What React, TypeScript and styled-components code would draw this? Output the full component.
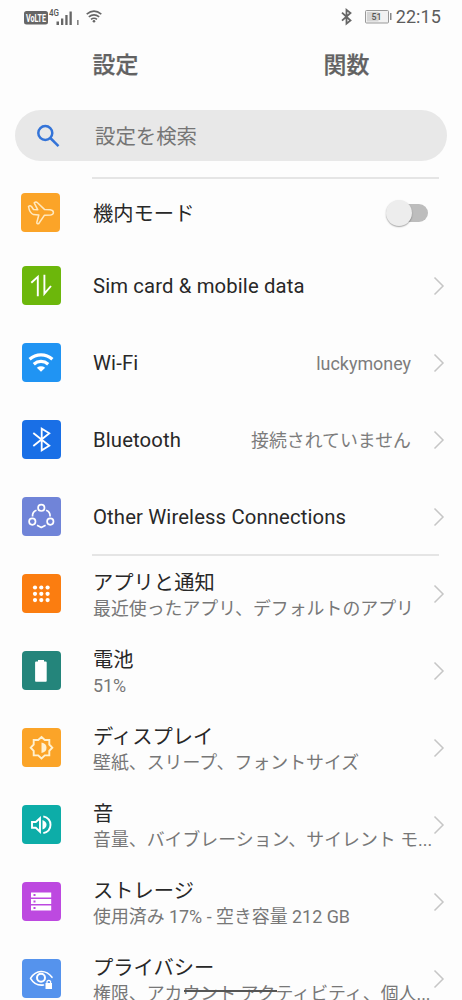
import React from "react";
import styled, { createGlobalStyle } from "styled-components";

const Global = createGlobalStyle`
  * { box-sizing: border-box; }
  html, body { margin: 0; padding: 0; background: #fdfdfd; }
  body { font-family: Roboto, "Noto Sans CJK JP", sans-serif; overflow: hidden; }
`;

const Screen = styled.main`
  position: relative;
  width: 462px;
  height: 1000px;
  overflow: hidden;
  background: #fdfdfd;
`;

const StatusBar = styled.header`
  display: flex;
  justify-content: space-between;
  height: 34px;
  padding: 0 21px 0 24px;
  color: #666;
`;

const StatusGroup = styled.div`
  display: flex;
  align-items: center;
`;

const Clock = styled.span`
  margin-left: 4px;
  font-size: 18px;
  line-height: 34px;
  letter-spacing: 0.1px;
  color: #5c5c5c;
`;

const Tabs = styled.nav`
  display: flex;
  height: 76px;
`;

const Tab = styled.div`
  width: 231px;
  padding-top: 16px;
  text-align: center;
  font-size: 22.9px;
  line-height: 31px;
  font-weight: 500;
  color: #626262;
  -webkit-text-stroke: 0.25px #626262;
`;

const Search = styled.div`
  display: flex;
  align-items: center;
  height: 51px;
  margin: 0 15px;
  padding-left: 21px;
  border-radius: 26px;
  background: #e8e8e8;
  color: #757575;
  font-size: 20.4px;
  line-height: 30px;
`;

const SearchText = styled.span`
  margin: 2px 0 0 35px;
`;

const Divider = styled.div<{ $top?: number; $bottom?: number }>`
  height: 2px;
  margin: ${(p) => p.$top ?? 0}px 23px ${(p) => p.$bottom ?? 0}px 92px;
  background: #e5e5e5;
`;

const Row = styled.div<{ $height?: number; $shift?: number }>`
  display: flex;
  align-items: center;
  height: ${(p) => p.$height ?? 77}px;
  padding: 0 17px 0 ${(p) => 22 - (p.$shift ?? 0)}px;
`;

const Tile = styled.div<{ $color: string; $lift?: number }>`
  flex: none;
  width: 39px;
  height: 39px;
  margin-bottom: ${(p) => p.$lift ?? 0}px;
  border-radius: 4px;
  background: ${(p) => p.$color};
  svg { display: block; }
`;

const Labels = styled.div<{ $indent?: number; $drop?: number }>`
  flex: 1;
  min-width: 0;
  margin-left: ${(p) => p.$indent ?? 32}px;
  margin-top: ${(p) => p.$drop ?? 0}px;
  white-space: nowrap;
`;

const Title = styled.div<{ $latin?: boolean }>`
  font-size: 20.3px;
  line-height: 26px;
  letter-spacing: ${(p) => (p.$latin ? 0.13 : 0)}px;
  color: #282828;
`;

const Subtitle = styled.div`
  font-size: 17.9px;
  line-height: 26px;
  color: #777;
`;

const Value = styled.span`
  margin: 2px 22px 0 0;
  font-size: 17.9px;
  line-height: 26px;
  color: #7c7c7c;
`;

const Toggle = styled.div`
  display: flex;
  align-items: center;
  width: 37px;
  height: 18px;
  margin-right: 17px;
  margin-bottom: 1px;
  border-radius: 9px;
  background: #bdbdbd;
`;

const Knob = styled.div`
  flex: none;
  width: 26px;
  height: 26px;
  margin-left: -5px;
  border-radius: 50%;
  background: #ededed;
  box-shadow: 0 1px 1.5px rgba(0, 0, 0, 0.35);
`;

const HomeBar = styled.div`
  position: absolute;
  left: 184px;
  top: 990px;
  width: 93px;
  height: 2px;
  background: #555;
`;

const Chevron = () => (
  <svg width="12" height="20" viewBox="0 0 12 20" fill="none" stroke="#c6c6c6" strokeWidth="1.5">
    <path d="M1.500 1.500 10 10 1.500 18.500" />
  </svg>
);

const Glyph = ({ children, width = 1.5 }: { children: React.ReactNode; width?: number }) => (
  <svg width="39" height="39" viewBox="0 0 39 39" fill="none" stroke="#fff" strokeWidth={width} strokeLinecap="round" strokeLinejoin="round">
    {children}
  </svg>
);

const icons = {
  plane: (
    <Glyph width={1.5}>
      <path stroke="#ffe9c0" d="M7.500 13.500q1.500-1.500 3 0l2 3 4.300.3-3.600-7q1.800-1.600 3.300 0l7.200 6.800 5.500.2c4.200.6 4.200 4.600.5 5.200l-6.200.2-5.700 8.300q-2 .8-2-1l2-7.500-5.300-.4C9.500 20.500 8 17 7.500 13.500Z" />
    </Glyph>
  ),
  data: (
    <Glyph width={1.9}>
      <path strokeLinecap="butt" strokeLinejoin="miter" d="M9.300 16.800 15.800 10.800v19.400M22.400 8.800v18.800l6.600-7.600" />
    </Glyph>
  ),
  wifi: (
    <Glyph width={3.2}>
      <path strokeLinecap="butt" d="M7.600 16.200c6.500-5.800 16.300-5.800 22.800 0M11.800 21.200c4.200-3.700 10.200-3.700 14.400 0" />
      <path stroke="none" fill="#fff" d="M14.800 24.700q4.200-2.900 8.400 0L19 28.700Z" />
    </Glyph>
  ),
  bluetooth: (
    <Glyph width={1.8}>
      <path strokeLinecap="butt" strokeLinejoin="miter" d="m11.300 13 16 12.700-7.600 4.600V8.700l7.600 4.600L11.300 26" />
    </Glyph>
  ),
  link: (
    <Glyph width={1.7}>
      <circle cx="19.300" cy="10.800" r="3.200" />
      <circle cx="10.300" cy="24.600" r="3.200" />
      <circle cx="28.300" cy="24.600" r="3.200" />
      <path strokeLinecap="butt" d="M14.500 13.300q-4.200 1.500-4 6.200M24.100 13.300q4.200 1.500 4 6.200M15 28.200l4.300 2.200 4.300-2.200" />
    </Glyph>
  ),
  apps: (
    <Glyph>
      <g fill="#fff" stroke="none">
        {[13, 19.3, 25.6].map((y) => [13, 19.3, 25.6].map((x) => <circle key={`${x}-${y}`} cx={x} cy={y + 0.5} r="2.100" />))}
      </g>
    </Glyph>
  ),
  battery: (
    <Glyph>
      <path fill="#fff" stroke="none" d="M16 9h6v1.500h1.700q1 0 1 1v18.500q0 .8-.8.800h-10q-.8 0-.8-.8V11.500q0-1 1-1H16Z" />
    </Glyph>
  ),
  brightness: (
    <Glyph width={1.9}>
      <path stroke="#fff1d0" strokeLinejoin="miter" d="m19.500 9 3.300 3h4.500v4.500l3 3.200-3 3.200v4.500h-4.500l-3.300 3-3.300-3h-4.500v-4.500l-3-3.200 3-3.200V12h4.500Z" />
      <path fill="#fff1d0" stroke="none" d="M19.500 14.500q5 1 5 5.200t-5 5.200Z" />
    </Glyph>
  ),
  sound: (
    <Glyph width={1.9}>
      <path strokeLinecap="butt" strokeLinejoin="miter" d="M10 17h3.800l4.200-3.800v13.500l-4.200-3.900H10Z" />
      <path fill="#fff" stroke="none" d="M20.500 15q4 1.600 4 4.800t-4 4.800Z" />
      <path strokeLinecap="butt" d="M21.300 11.300c9.600 2.500 9.600 14.400 0 16.900" />
    </Glyph>
  ),
  storage: (
    <Glyph>
      <g stroke="none">
        <path fill="#fff" d="M9 10.400h20.200v5H9ZM9 17h20.200v5H9ZM9 23.600h20.200v5H9Z" />
        <path fill="#bd49e0" d="M11.500 11.900h2v2h-2ZM11.500 18.500h2v2h-2ZM11.500 25.100h2v2h-2Z" />
      </g>
    </Glyph>
  ),
  privacy: (
    <Glyph width={1.6}>
      <path d="M21.500 26c-5.400.8-10-1.700-13-6.700 5.500-8.800 15.500-8.800 21.500-1" />
      <circle cx="19" cy="18.800" r="4" strokeWidth="2" />
      <path fill="#fff" stroke="none" d="M23.500 24h6.500v6h-6.500Z" />
      <path strokeWidth="1.200" d="M25 24v-1.500q1.800-2.200 3.600 0V24" />
    </Glyph>
  ),
};

type Item = { icon: keyof typeof icons; color: string; title: string; sub?: string; value?: string; latin?: boolean };

const wireless: Item[] = [
  { icon: "data", color: "#6cb70b", title: "Sim card & mobile data", latin: true },
  { icon: "wifi", color: "#2094f3", title: "Wi-Fi", value: "luckymoney", latin: true },
  { icon: "bluetooth", color: "#196fe6", title: "Bluetooth", value: "接続されていません", latin: true },
  { icon: "link", color: "#7084d8", title: "Other Wireless Connections", latin: true },
];

const system: Item[] = [
  { icon: "apps", color: "#fb7d10", title: "アプリと通知", sub: "最近使ったアプリ、デフォルトのアプリ" },
  { icon: "battery", color: "#24857b", title: "電池", sub: "51%" },
  { icon: "brightness", color: "#fba428", title: "ディスプレイ", sub: "壁紙、スリープ、フォントサイズ" },
  { icon: "sound", color: "#0dada8", title: "音", sub: "音量、バイブレーション、サイレント モ..." },
  { icon: "storage", color: "#bd49e0", title: "ストレージ", sub: "使用済み 17% - 空き容量 212 GB" },
  { icon: "privacy", color: "#5593ed", title: "プライバシー", sub: "権限、アカウント アクティビティ、個人..." },
];

const SettingRow = ({ item }: { item: Item }) => (
  <Row>
    <Tile $color={item.color}>{icons[item.icon]}</Tile>
    <Labels $drop={item.sub ? 5 : 0}>
      <Title $latin={item.latin}>{item.title}</Title>
      {item.sub && <Subtitle>{item.sub}</Subtitle>}
    </Labels>
    {item.value && <Value>{item.value}</Value>}
    <Chevron />
  </Row>
);

const SignalIcons = () => (
  <svg width="80" height="34" viewBox="24 0 80 34" fontFamily="Roboto, sans-serif">
    <rect x="24" y="11" width="24" height="13.500" rx="2.500" fill="#666" />
    <text x="26" y="21.700" fontSize="10" fontWeight="700" fill="#fff" textLength="20" lengthAdjust="spacingAndGlyphs">VoLTE</text>
    <text x="49" y="15.500" fontSize="8.500" fontWeight="500" fill="#555" textLength="10" lengthAdjust="spacingAndGlyphs">4G</text>
    <path fill="#666" d="M56.500 21.500h2.500V25h-2.500ZM61 18.500h2.300V25H61ZM65.300 15h2.300v10h-2.300ZM69.500 11.500h2.300V25h-2.300ZM77.200 20h1.300v5h-1.300Z" />
    <g fill="none" stroke="#666" strokeWidth="1.600">
      <path d="M86.700 14.200q7.300-6 14.600 0M88.800 16.900q5.200-4 10.400 0M91 19.400q3-2.200 6 0" />
    </g>
    <circle cx="94" cy="21.200" r="1.300" fill="#666" />
  </svg>
);

const PowerIcons = () => (
  <svg width="52" height="34" viewBox="341 0 52 34" fontFamily="Roboto, sans-serif">
    <path fill="none" stroke="#666" strokeWidth="1.800" d="m343 12.700 8.500 7.800-4 3.200V9.800l4 3.200-8.500 7.700" />
    <rect x="366.500" y="10.500" width="23" height="12.500" rx="1" fill="#f2f2f2" stroke="#999" />
    <rect x="368" y="12" width="11.500" height="9.500" fill="#d5d5d5" />
    <path fill="#888" d="M391 13h1.500v7H391Z" />
    <text x="372.500" y="20" fontSize="9" fontWeight="500" fill="#555" textLength="10" lengthAdjust="spacingAndGlyphs">51</text>
  </svg>
);

export default function App() {
  return (
    <>
      <Global />
      <Screen>
        <StatusBar>
          <StatusGroup><SignalIcons /></StatusGroup>
          <StatusGroup><PowerIcons /><Clock>22:15</Clock></StatusGroup>
        </StatusBar>
        <Tabs>
          <Tab>設定</Tab>
          <Tab>関数</Tab>
        </Tabs>
        <Search>
          <svg width="24" height="24" viewBox="0 0 24 24" fill="none" stroke="#3474d8" strokeWidth="2.500">
            <circle cx="9.300" cy="9" r="7" />
            <path d="m14.300 14 8.200 8.200" />
          </svg>
          <SearchText>設定を検索</SearchText>
        </Search>
        <Divider $top={16} />
        <Row $height={68} $shift={1}>
          <Tile $color="#fba428" $lift={2}>{icons.plane}</Tile>
          <Labels $indent={33} $drop={1}><Title>機内モード</Title></Labels>
          <Toggle><Knob /></Toggle>
        </Row>
        {wireless.map((item) => <SettingRow key={item.title} item={item} />)}
        <Divider $top={-1} $bottom={-1} />
        {system.map((item) => <SettingRow key={item.title} item={item} />)}
        <HomeBar />
      </Screen>
    </>
  );
}
